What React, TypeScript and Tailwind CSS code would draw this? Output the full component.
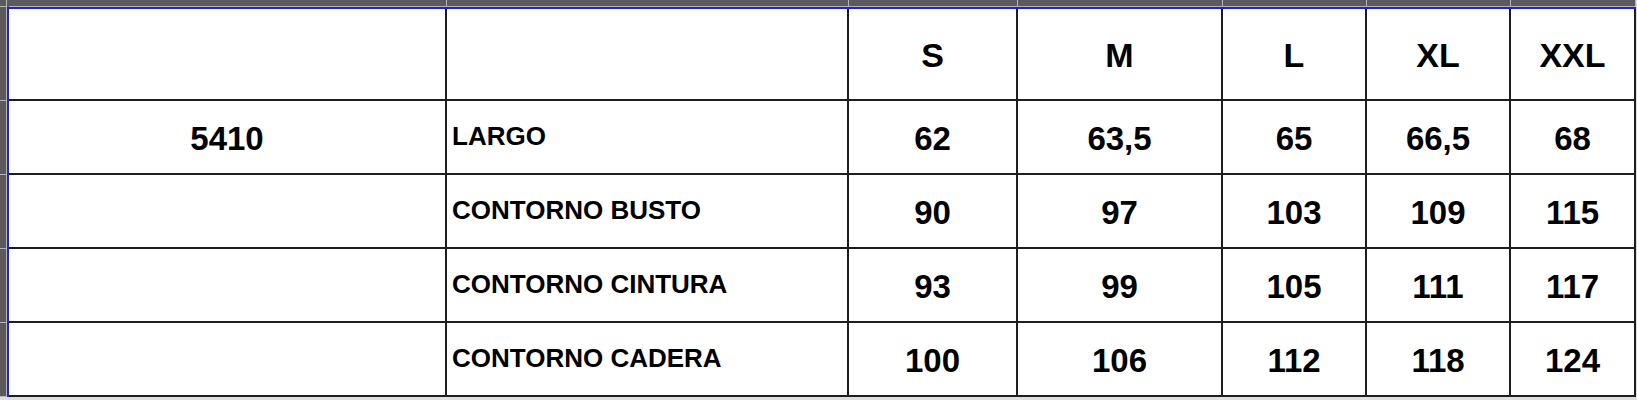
const COLS = [438, 402, 169, 205, 144, 144, 125]
const ROWS = [92, 74, 74, 74, 74]

const SIZES = ['S', 'M', 'L', 'XL', 'XXL']

const DATA: { model: string; label: string; values: string[] }[] = [
  { model: '5410', label: 'LARGO', values: ['62', '63,5', '65', '66,5', '68'] },
  { model: '', label: 'CONTORNO BUSTO', values: ['90', '97', '103', '109', '115'] },
  { model: '', label: 'CONTORNO CINTURA', values: ['93', '99', '105', '111', '117'] },
  { model: '', label: 'CONTORNO CADERA', values: ['100', '106', '112', '118', '124'] },
]

const font = { fontFamily: '"Liberation Sans", Arial, sans-serif' }

function Cell({ w, h, children, className = '' }: { w: number; h: number; children?: React.ReactNode; className?: string }) {
  return (
    <div
      className={`shrink-0 border-r-2 border-b-2 border-[#1e1e1e] bg-white flex items-center ${className}`}
      style={{ width: w, height: h }}
    >
      {children}
    </div>
  )
}

export default function App() {
  return (
    <div className="w-[1637px] h-[400px] bg-[#dedede] overflow-hidden flex flex-col" style={font}>
      {/* column header strip */}
      <div className="flex h-[7px] shrink-0">
        <div className="w-[7px] h-full bg-[#5a5a5a] border-r border-b border-[#b5b5b5]" />
        <div className="w-[2px] h-full bg-[#5a5a5a]" />
        {COLS.map((w, i) => (
          <div
            key={i}
            className="h-full bg-[#5a5a5a] border-r border-b border-[#b5b5b5] shrink-0"
            style={{ width: w }}
          />
        ))}
      </div>

      <div className="flex">
        {/* row header strip */}
        <div className="w-[7px] shrink-0 flex flex-col">
          <div className="h-[2px] bg-[#5a5a5a] border-r border-[#b5b5b5]" />
          {ROWS.map((h, i) => (
            <div
              key={i}
              className="bg-[#5a5a5a] border-r border-b border-[#b5b5b5]"
              style={{ height: h }}
            />
          ))}
        </div>

        {/* sheet */}
        <div className="border-l-2 border-t-2 border-[#1f1fe0] flex flex-col">
          <div className="flex">
            <Cell w={COLS[0]} h={ROWS[0]} />
            <Cell w={COLS[1]} h={ROWS[0]} />
            {SIZES.map((s, i) => (
              <Cell key={s} w={COLS[i + 2]} h={ROWS[0]} className="justify-center pt-[2px]">
                <span className="text-[34px] font-bold text-black leading-none">{s}</span>
              </Cell>
            ))}
          </div>

          {DATA.map((row, r) => (
            <div key={r} className="flex">
              <Cell w={COLS[0]} h={ROWS[r + 1]} className="justify-center pt-[2px]">
                <span className="text-[33px] font-bold text-black leading-none">{row.model}</span>
              </Cell>
              <Cell w={COLS[1]} h={ROWS[r + 1]} className="pl-[5px] pb-[2px]">
                <span className="text-[26px] font-bold text-black leading-none">{row.label}</span>
              </Cell>
              {row.values.map((v, i) => (
                <Cell key={i} w={COLS[i + 2]} h={ROWS[r + 1]} className="justify-center pt-[3px]">
                  <span className="text-[33px] font-bold text-black leading-none">{v}</span>
                </Cell>
              ))}
            </div>
          ))}
        </div>
      </div>
    </div>
  )
}
